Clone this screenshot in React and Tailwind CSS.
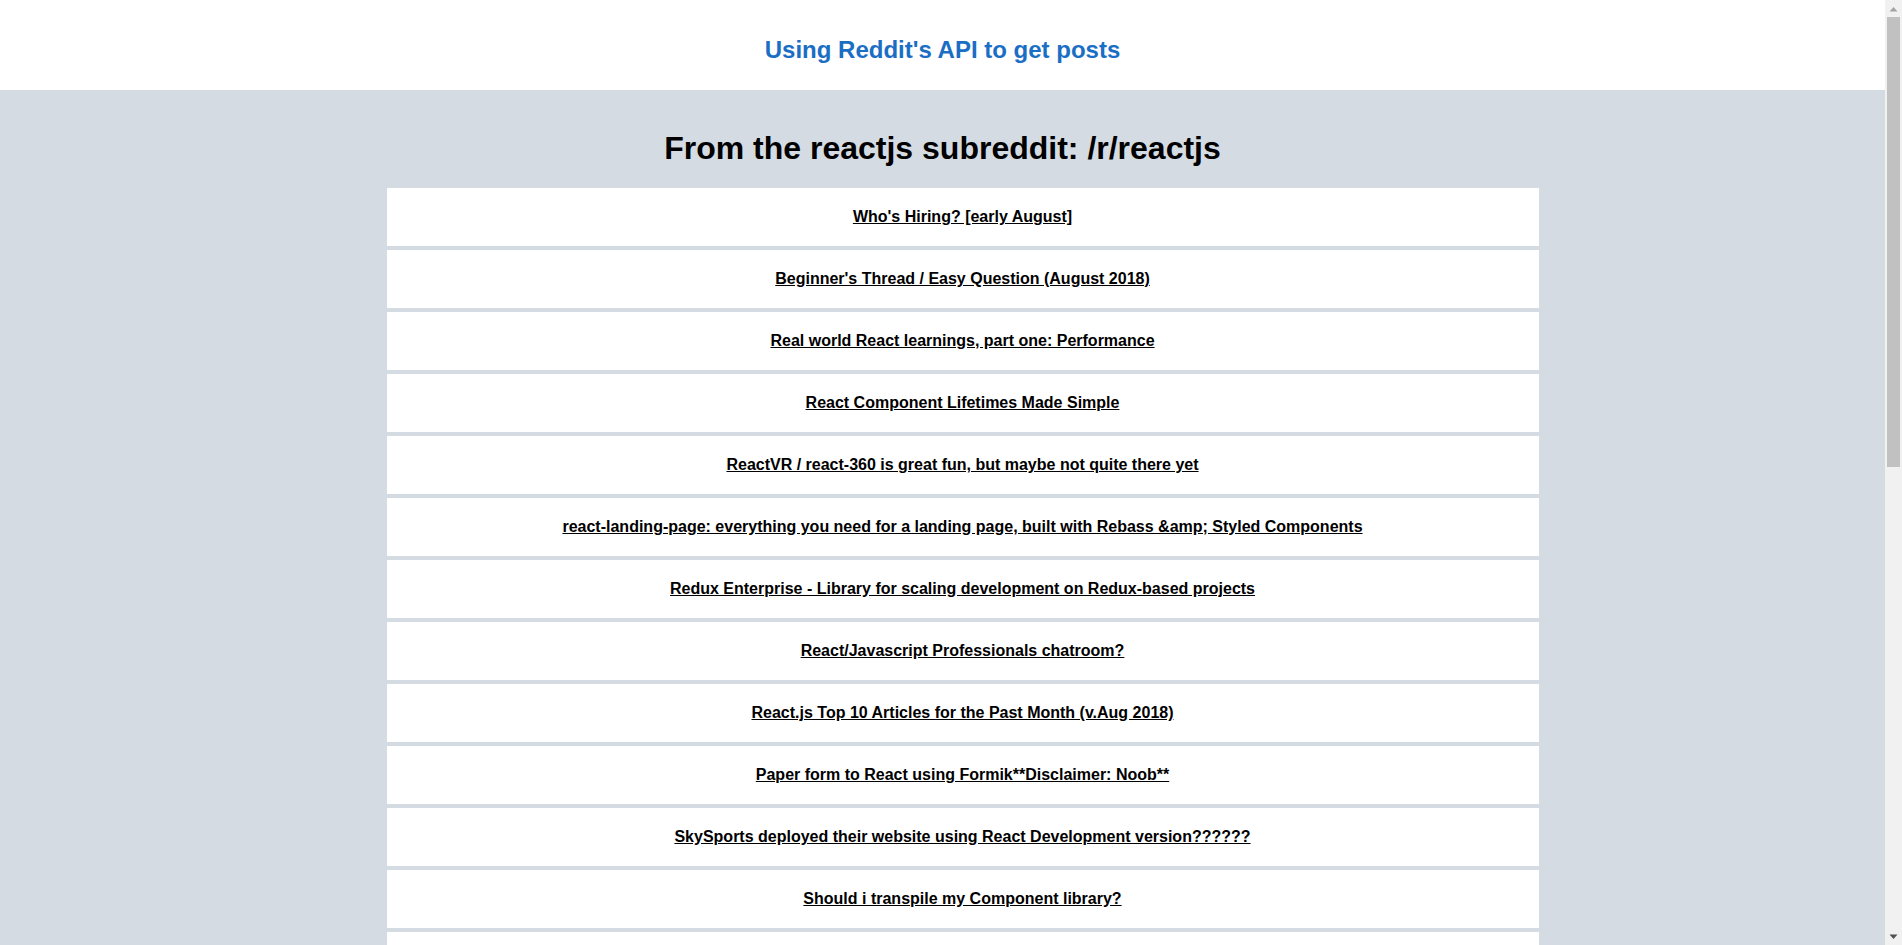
import React from "react";

const posts = [
  "Who's Hiring? [early August]",
  "Beginner's Thread / Easy Question (August 2018)",
  "Real world React learnings, part one: Performance",
  "React Component Lifetimes Made Simple",
  "ReactVR / react-360 is great fun, but maybe not quite there yet",
  "react-landing-page: everything you need for a landing page, built with Rebass &amp; Styled Components",
  "Redux Enterprise - Library for scaling development on Redux-based projects",
  "React/Javascript Professionals chatroom?",
  "React.js Top 10 Articles for the Past Month (v.Aug 2018)",
  "Paper form to React using Formik**Disclaimer: Noob**",
  "SkySports deployed their website using React Development version??????",
  "Should i transpile my Component library?",
  "How do you structure your React projects?",
  "Introducing React Hooks-like state management",
  "Testing React components with Jest and Enzyme",
];

function Scrollbar() {
  return (
    <div className="fixed top-0 right-0 w-[17px] h-screen bg-[#f1f1f1] flex flex-col">
      <div className="h-[17px] flex items-center justify-center">
        <svg width="9" height="6" viewBox="0 0 9 6">
          <path d="M0.5 5.5 L4.5 1 L8.5 5.5 Z" fill="#a3a3a3" />
        </svg>
      </div>
      <div className="h-[450px] mx-[2px] bg-[#c1c1c1]" />
      <div className="flex-1" />
      <div className="h-[17px] flex items-center justify-center">
        <svg width="9" height="6" viewBox="0 0 9 6">
          <path d="M0.5 0.5 L4.5 5 L8.5 0.5 Z" fill="#505050" />
        </svg>
      </div>
    </div>
  );
}

export default function App() {
  return (
    <div className="min-h-screen bg-[#d4dbe3] pr-[17px]" style={{ fontFamily: '"Liberation Sans", Arial, sans-serif' }}>
      <header className="h-[90px] bg-white flex items-center justify-center pt-[10px]">
        <h2 className="text-[24px] font-bold text-[#1a6ec4] leading-[28px]">Using Reddit's API to get posts</h2>
      </header>
      <main className="pt-[38px] pb-10">
        <h1 className="text-[32px] font-bold text-black text-center leading-[40px]">
          From the reactjs subreddit: /r/reactjs
        </h1>
        <ul className="mx-auto w-[1192px] pl-10 mt-[20px] flex flex-col gap-[4px]">
          {posts.map((p) => (
            <li key={p} className="h-[58px] bg-white flex items-center justify-center">
              <a href="#" className="text-[16px] font-bold text-black underline leading-[18px]">
                {p}
              </a>
            </li>
          ))}
        </ul>
      </main>
      <Scrollbar />
    </div>
  );
}
